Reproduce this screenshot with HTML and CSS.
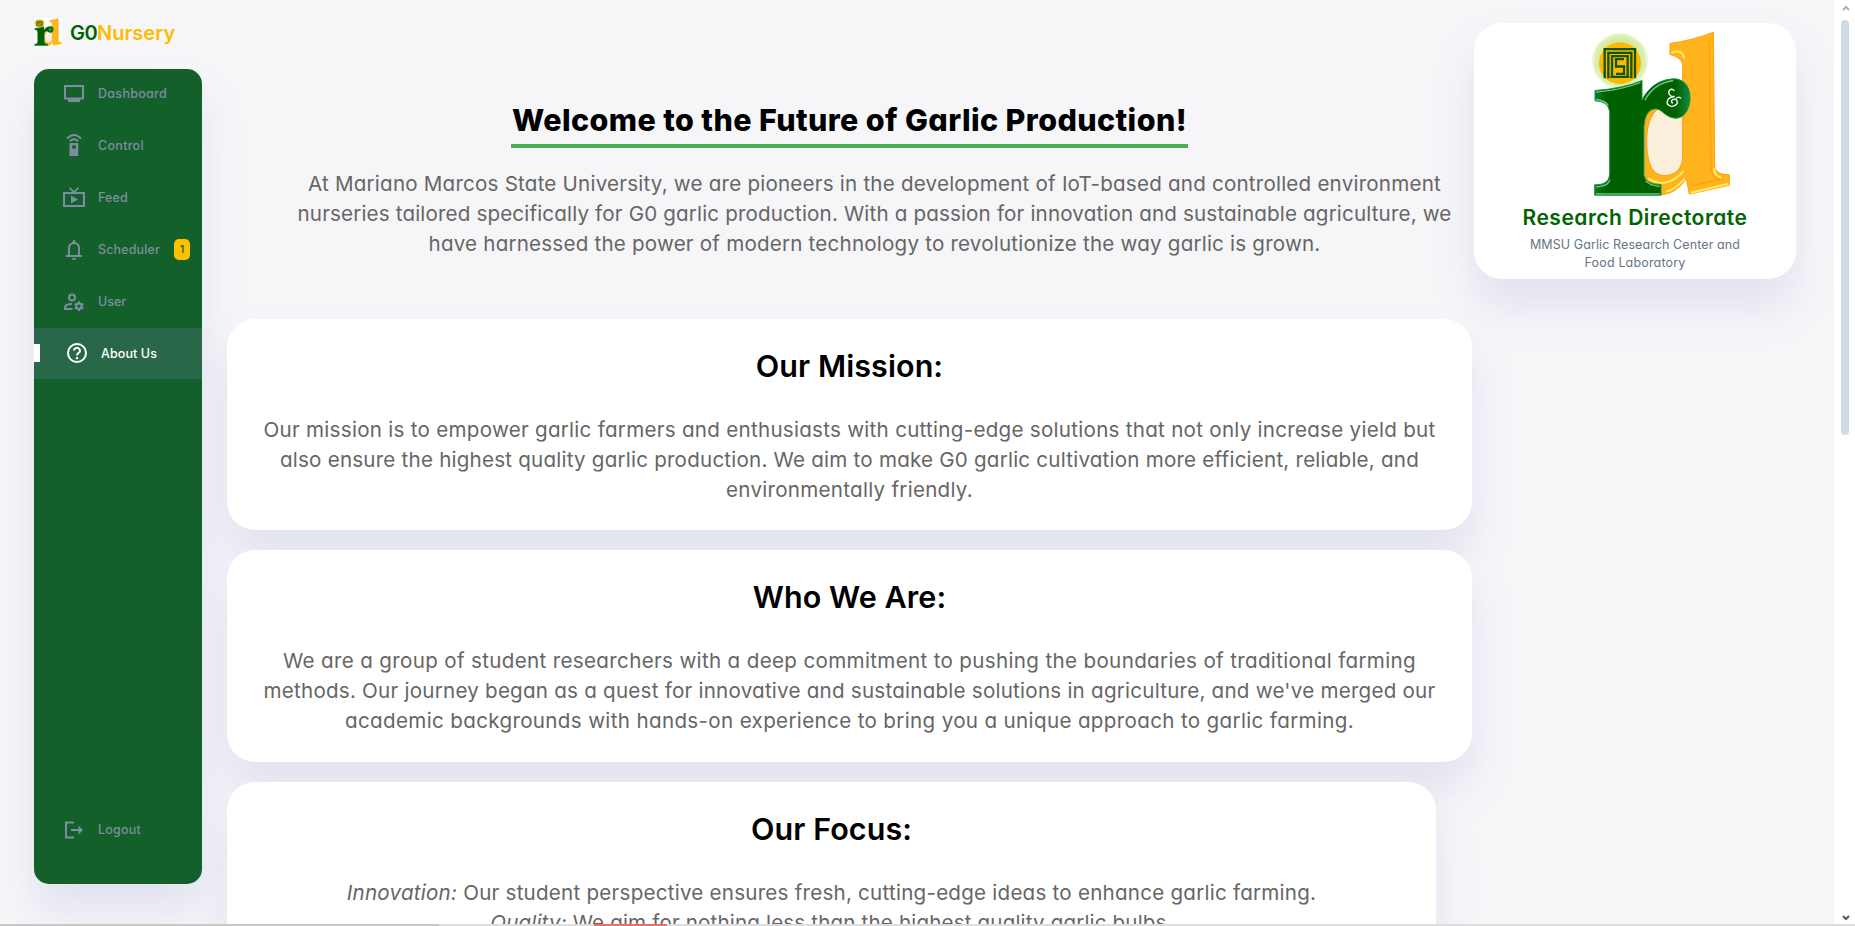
FILE: index.html
```html
<!DOCTYPE html>
<html lang="en">
<head>
<meta charset="utf-8">
<title>G0Nursery</title>
<link rel="stylesheet" href="styles.css">
</head>
<body>
<div class="page">
  <aside class="side">
    <div class="brand">
      <svg class="brand-logo" viewBox="96 30 420 500" preserveAspectRatio="none"><use href="#rd-logo"/></svg>
      <h2 class="brand-name"><span class="brand-g0">G0</span><span class="gold">Nursery</span></h2>
    </div>
    <nav class="sidebar">
      <a class="item"><svg class="icon" viewBox="0 0 24 24"><path d="M2 3H22V17.5H2ZM4 5V15.5H20V5ZM6 17H18V20H6Z"/></svg><span class="ls-30">Dashboard</span></a>
      <a class="item"><svg class="icon" viewBox="0 0 24 24"><path fill-rule="evenodd" d="M7.5 9H16.2V22H7.5ZM12 11a2 2 0 1 0 .01 0Z"/><path class="line" d="M5 4.6Q12-2.4 19 4.6M7.8 7.3Q12 3.2 16.2 7.3"/></svg><span class="ls-30">Control</span></a>
      <a class="item"><svg class="icon" viewBox="0 0 24 24"><path fill-rule="evenodd" d="M1 6H10.6L7 2.4 8.2 1.3 12 5.1 15.8 1.3 17 2.4 13.4 6H23V21H1ZM3 8V19H21V8ZM9 9.5L16 13.5 9 17.5Z"/></svg><span class="ls-16">Feed</span></a>
      <a class="item"><svg class="icon" viewBox="0 0 24 24"><path fill-rule="evenodd" d="M4 19V17H6V10C6 7 7.7 5 10.5 4.2V3.5A1.5 1.5 0 0 1 13.5 3.5V4.2C16.3 5 18 7 18 10V17H20V19ZM8 17H16V10A4 4 0 0 0 8 10ZM10 20H14A2 2 0 0 1 10 20Z"/></svg><span class="ls-14">Scheduler</span><span class="count">1</span></a>
      <a class="item"><svg class="icon" viewBox="0 0 24 24"><path class="line" d="M13 7.6A3 3 0 1 1 7 7.6A3 3 0 1 1 13 7.6M10.5 19H3V17.4Q3 14.2 10 14"/><circle class="line" cx="17" cy="16.2" r="2.6"/><path class="teeth" d="M17 11.3v2M17 19v2M12.8 13.8l1.7 1M19.5 17.7l1.7 1M21.2 13.8l-1.7 1M14.5 17.7l-1.7 1"/></svg><span>User</span></a>
      <a class="item active"><svg class="icon" viewBox="0 0 24 24"><circle class="line" cx="12" cy="12" r="9"/><path class="line" d="M9 9.6A3 2.7 0 1 1 13.8 11.7Q12 12.8 12 14.6"/><path d="M10.9 16H13.1V18.2H10.9Z"/></svg><span class="ls-10">About Us</span></a>
      <a class="item logout"><svg class="icon" viewBox="0 0 24 24"><path d="M3 3.5H12V5.5H5V18.5H12V20.5H3ZM9 11H16.5V7.5L21 12 16.5 16.5V13H9Z"/></svg><span class="ls-22">Logout</span></a>
    </nav>
  </aside>

  <main class="main">
    <section class="intro">
      <h1 class="title">Welcome to the Future of Garlic Production!</h1>
      <p class="text"><span class="ls-207">At Mariano Marcos State University, we are pioneers in the development of IoT-based and controlled environment</span>
      <span class="ls-155">nurseries tailored specifically for G0 garlic production. With a passion for innovation and sustainable agriculture, we</span>
      <span class="ls-201">have harnessed the power of modern technology to revolutionize the way garlic is grown.</span></p>
    </section>
    <section class="card">
      <h2 class="heading">Our Mission:</h2>
      <p class="text"><span class="ls-267">Our mission is to empower garlic farmers and enthusiasts with cutting-edge solutions that not only increase yield but</span>
      <span class="ls-213">also ensure the highest quality garlic production. We aim to make G0 garlic cultivation more efficient, reliable, and</span>
      <span class="ls-267">environmentally friendly.</span></p>
    </section>
    <section class="card">
      <h2 class="heading">Who We Are:</h2>
      <p class="text"><span class="ls-333">We are a group of student researchers with a deep commitment to pushing the boundaries of traditional farming</span>
      <span class="ls-230">methods. Our journey began as a quest for innovative and sustainable solutions in agriculture, and we've merged our</span>
      <span class="ls-341">academic backgrounds with hands-on experience to bring you a unique approach to garlic farming.</span></p>
    </section>
    <section class="card focus">
      <h2 class="heading">Our Focus:</h2>
      <p class="text"><span class="ls-230"><em>Innovation:</em> Our student perspective ensures fresh, cutting-edge ideas to enhance garlic farming.</span>
      <span class="ls-155"><em>Quality:</em> We aim for nothing less than the highest quality garlic bulbs.</span></p>
    </section>
  </main>

  <aside class="profile">
    <svg class="logo" viewBox="96 30 420 500">
      <defs>
        <linearGradient id="leaf" x1="0" x2="1"><stop offset="0" stop-color="#0a7a25"/><stop offset=".12" stop-color="#006000"/><stop offset=".85" stop-color="#006000"/><stop offset="1" stop-color="#128a3c"/></linearGradient>
        <radialGradient id="halo"><stop offset=".7" stop-color="#d3ea9c"/><stop offset=".9" stop-color="#dff2b6"/><stop offset="1" stop-color="#fff"/></radialGradient>
      </defs>
      <g id="rd-logo">
        <path fill="#fff" d="M96 30H516V530H96Z"/>
        <circle cx="180" cy="122" r="86" fill="url(#halo)"/>
        <circle cx="180" cy="129" r="63" fill="#fdb900"/>
        <path fill="none" stroke="#14550c" stroke-width="7" d="M134 174V87H225V174M145 174V98H214V174M156 168V108H203V168M151 170H208M192 117H168V139H192V161H168"/>
        <path fill="#faefdb" d="M258 270H370V470H258Z"/>
        <path fill="#ffb31c" stroke="#ff9f0a" stroke-width="3" d="M330 70Q400 60 460 36L464 440Q468 464 508 464V495L388 522L379 475Q350 520 304 524L255 490V300Q264 262 300 262C270 280 260 320 260 365C262 440 280 466 315 466C350 466 368 440 368 410V130Q360 110 330 103Z"/>
        <path fill="none" stroke="#ffef6a" stroke-width="6" d="M334 98Q365 84 373 115M392 518L506 491M463 442Q460 468 484 472M265 475Q320 510 371 453M374 475Q350 505 319 515"/>
        <path fill="none" stroke="#ffa006" stroke-width="4" d="M448 62L453 445Q456 470 478 478L397 497"/>
        <path fill="url(#leaf)" stroke="#16934a" stroke-width="3" d="M105 211Q190 205 246 181V240C270 192 310 176 345 176C375 178 392 203 390 240C386 276 368 295 345 294C315 292 307 266 286 266C258 268 252 300 252 330V465Q256 493 303 493V525H104V494Q148 495 149 462V275Q145 242 105 242Z"/>
        <path fill="none" stroke="#8be3a8" stroke-width="4" opacity=".8" d="M108 216Q188 209 241 187M108 238Q135 240 145 256M108 500Q140 500 150 480M257 482Q270 496 299 499M255 240Q280 190 340 181M108 521H300"/>
        <path fill="none" stroke="#fff" stroke-width="4" d="M343 212C333 202 322 211 328 223Q333 231 344 229C319 231 315 252 332 258C350 261 358 244 347 238C336 234 330 246 339 249M348 235Q356 227 363 235"/>
      </g>
    </svg>
    <h2 class="lab">Research Directorate</h2>
    <p class="sub"><span class="ls-10">MMSU Garlic Research Center and</span><span class="ls-16">Food Laboratory</span></p>
  </aside>

  <div class="scroll">
    <svg class="arrow up" viewBox="0 0 8 6"><path d="M1 5L4 2L7 5"/></svg>
    <div class="thumb"></div>
    <svg class="arrow" viewBox="0 0 8 6"><path d="M1 1L4 4L7 1"/></svg>
  </div>
</div>
<div class="edge"><i class="edge-a"></i><i class="edge-b"></i></div>
</body>
</html>
```
FILE: styles.css
```css
* { box-sizing: border-box; margin: 0; padding: 0; }
html, body { height: 100%; }
body {
  position: relative;
  overflow: hidden;
  background: #f6f6f9;
  font-family: Inter, "Open Sans", sans-serif;
  font-feature-settings: "cv11";
  font-size: 14px;
  color: #000;
}
.page { display: flex; height: 926px; white-space: nowrap; }

/* Tracking steps: sidebar and small text */
.ls-10 { letter-spacing: .09px; }
.ls-14 { letter-spacing: .14px; }
.ls-16 { letter-spacing: .168px; }
.ls-22 { letter-spacing: .22px; }
.ls-30 { letter-spacing: .3px; }
/* Tracking steps: body copy */
.ls-155 { letter-spacing: .155px; }
.ls-201 { letter-spacing: .201px; }
.ls-207 { letter-spacing: .207px; }
.ls-213 { letter-spacing: .213px; }
.ls-230 { letter-spacing: .23px; }
.ls-267 { letter-spacing: .267px; }
.ls-333 { letter-spacing: .333px; }
.ls-341 { letter-spacing: .341px; }

.side { width: 168px; margin-left: 34px; flex: none; }
.brand { display: flex; align-items: center; height: 69px; padding-bottom: 5px; gap: 8px; }
.brand-logo { width: 28px; height: 28px; flex: none; }
.brand-name { display: flex; font-size: 20px; font-weight: 600; color: #006400; line-height: 28px; padding-top: 2px; }
.brand-g0 { letter-spacing: -.594px; }
.gold { color: #ffbb00; }
.sidebar {
  display: flex;
  flex-direction: column;
  height: 815px;
  border-radius: 15px;
  background: #14602b;
  box-shadow: 0 28px 42px rgba(132, 139, 200, .18);
}
.item { display: flex; align-items: center; gap: 12px; height: 52px; padding: 0 0 1px 28px; color: #7d8da1; font-size: 12.5px; font-weight: 500; flex: none; }
.item:first-child { margin-top: -1px; }
.icon { width: 24px; height: 24px; fill: currentColor; flex: none; }
.line { fill: none; stroke: currentColor; stroke-width: 2; }
.teeth { fill: none; stroke: currentColor; stroke-width: 2.2; }
.count { width: 16px; height: 21px; margin-left: 2px; border-radius: 5px; background: #ffc000; color: #14602b; font-size: 11px; line-height: 20px; text-align: center; }
.active { position: relative; height: 51px; padding-left: 31px; background: #286848; color: #fff; }
.active::before { content: ""; position: absolute; left: 0; top: 16px; width: 6px; height: 18px; background: #fff; }
.logout { margin-top: auto; margin-bottom: 28px; }

.main { width: 1245px; margin-left: 25px; flex: none; text-align: center; }
.intro { height: 319px; padding-top: 98px; }
.title { display: inline-block; height: 50px; border-bottom: 4px solid #4caf50; font-size: 30.5px; font-weight: 800; line-height: 44px; letter-spacing: .389px; padding: 0 1px; }
.text { display: flex; flex-direction: column; align-items: center; font-size: 20.6px; line-height: 30px; color: #666; }
.intro .text { margin-top: 21px; padding-left: 50px; }
.card { height: 211.4px; margin-bottom: 20px; padding-top: 25px; border-radius: 28px; background: #fff; box-shadow: 0 28px 42px rgba(132, 139, 200, .18); }
.focus { width: 1209px; }
.heading { font-size: 30.5px; font-weight: 600; line-height: 44px; letter-spacing: .07px; margin-bottom: 27px; }

.profile { display: flex; flex-direction: column; align-items: center; width: 322px; height: 256px; margin: 23px 0 0 2px; padding-top: 7px; border-radius: 28px; background: #fff; box-shadow: 0 28px 42px rgba(132, 139, 200, .18); flex: none; }
.logo { width: 140px; height: 167px; margin-left: 53px; flex: none; }
.lab { font-size: 21px; font-weight: 600; line-height: 30px; letter-spacing: .502px; margin-top: 6px; color: #006400; }
.sub { display: flex; flex-direction: column; align-items: center; margin-top: 3px; font-size: 12.5px; line-height: 18px; color: #677483; }

.scroll { display: flex; flex-direction: column; align-items: center; width: 21px; margin-left: auto; padding: 5px 0; background: #fff; }
.thumb { width: 8px; height: 415px; margin: 9px 0 auto 1px; border-radius: 4px; background: #cfdbe4; }
.arrow { width: 8px; height: 6px; margin-left: 2px; fill: none; stroke: #555; stroke-width: 2; flex: none; }
.up { stroke: #b0b0b0; }
.edge { position: absolute; left: 0; right: 0; bottom: 0; display: flex; height: 2px; background: #dedede; }
.edge-a { width: 439px; background: #c8c8c8; }
.edge-b { width: 73px; margin-left: 155px; background: #f36a6a; }
```
